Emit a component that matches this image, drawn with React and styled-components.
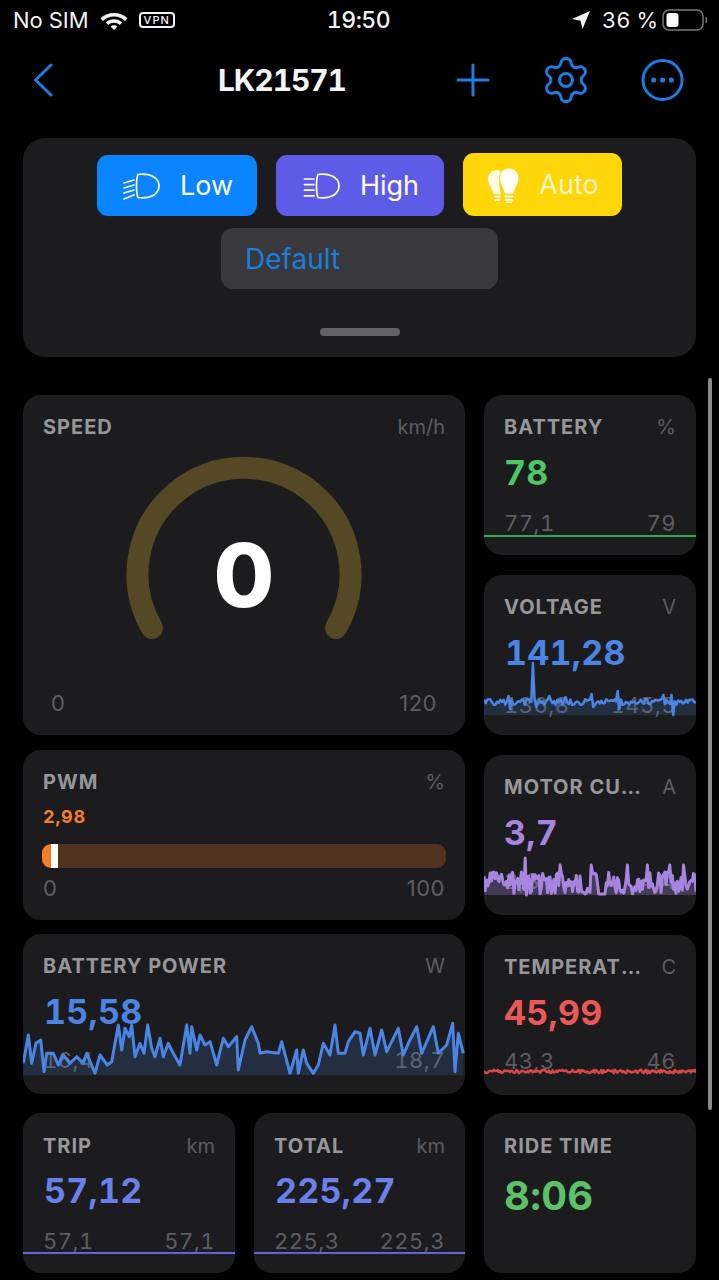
import React from 'react';
import styled, { createGlobalStyle } from 'styled-components';
import { Settings } from 'lucide-react';

const Global = createGlobalStyle`
  html, body { margin: 0; background: #000; }
  * { box-sizing: border-box; }
`;
const Page = styled.div`
  position: relative; width: 719px; height: 1280px; overflow: hidden; background: #000;
  font-family: Inter, "Liberation Sans", sans-serif; color: #fff;
`;
const StatusBar = styled.div`
  height: 40px; padding: 0 9px 0 13px; display: flex; align-items: center;
  font-size: 22px; color: #f2f2f2; font-variant-numeric: tabular-nums;
`;
const StatusSide = styled.div`
  flex: 1; display: flex; align-items: center; gap: ${p => p.$gap || 8}px; justify-content: ${p => p.$end ? 'flex-end' : 'flex-start'};
`;
const Time = styled.div`font-weight: 500; font-size: 23px; letter-spacing: -.5px; margin-right: 6px;`;
const Percent = styled.span`margin: 0 -3px 0 4px;`;
const Vpn = styled.span`
  border: 2px solid #f2f2f2; border-radius: 4px; font-size: 11px; line-height: 12px; padding: 0 3px; letter-spacing: 1px; font-weight: 500;
`;
const Nav = styled.div`
  height: 80px; display: flex; align-items: center; padding-left: 33px; color: #1b7de3;
`;
const Title = styled.div`
  margin-left: 165px; width: 127px; font-size: 30px; font-weight: 700; color: #f4f4f4; white-space: nowrap;
  font-variant-numeric: tabular-nums; letter-spacing: -1.1px;
`;
const NavIcon = styled.svg`display: block; flex: none; margin-left: ${p => p.$ml || 0}px;`;
const Panel = styled.section`
  margin: 18px 23px 0; height: 219px; border-radius: 22px; background: #1c1c1e; padding-top: 15px;
  display: flex; flex-direction: column; align-items: center;
`;
const ButtonRow = styled.div`display: flex; gap: 19px; align-items: flex-end;`;
const ModeButton = styled.div`
  width: ${p => p.$w}px; height: ${p => p.$h || 61}px; background: ${p => p.$bg}; border-radius: 11px;
  display: flex; align-items: center; justify-content: center; gap: 19px; padding-left: 2px; font-size: 27px; color: ${p => p.$fg || '#fff'};
`;
const Select = styled.div`
  margin-top: 12px; width: 277px; height: 61px; border-radius: 12px; background: #39393d; color: #1b7ddb;
  font-size: 28px; display: flex; align-items: center; padding-left: 24px;
`;
const Handle = styled.div`margin-top: 39px; width: 80px; height: 8px; border-radius: 4px; background: #636366;`;

const Grid = styled.main`
  margin: 38px 23px 0; display: grid; grid-template-columns: 442px 212px; column-gap: 19px;
`;
const Column = styled.div`display: flex; flex-direction: column; gap: ${p => p.$gap || 0}px;`;
const Card = styled.article`
  position: relative; overflow: hidden; flex: none; background: #1c1c1e; border-radius: 18px;
  height: ${p => p.$h || 160}px; margin-bottom: ${p => p.$mb || 0}px; width: ${p => p.$w ? p.$w + 'px' : 'auto'};
`;
const Header = styled.header`
  display: flex; justify-content: space-between; gap: 8px; padding: ${p => p.$pt || 20}px 20px 0 20px; height: 56px; line-height: 24px;
`;
const Label = styled.h3`
  margin: 0; flex: 1; min-width: 0; overflow: hidden; white-space: nowrap; text-overflow: ellipsis;
  font-size: 20px; line-height: 24px; font-weight: 700; color: #97979b; letter-spacing: 1px;
`;
const Unit = styled.span`font-size: 20px; color: #5d5d61; flex: none;`;
const Value = styled.div`
  padding-left: ${p => p.$pl || 20}px; margin-top: ${p => p.$mt || 0}px; font-size: ${p => p.$size || 34}px; line-height: 44px; font-weight: 700; letter-spacing: .3px; color: ${p => p.$color};
  font-variant-numeric: tabular-nums;
`;
const Range = styled.div`
  display: flex; justify-content: space-between; padding: 0 ${p => p.$pr || 20}px 0 ${p => p.$pl || 20}px; margin-top: ${p => p.$mt || 15}px;
  font-size: 22px; line-height: 26px; color: #5d5d61; letter-spacing: .5px;
  font-variant-numeric: ${p => p.$plain ? 'normal' : 'tabular-nums'};
`;
const Chart = styled.svg`position: absolute; left: 0; top: 0; pointer-events: none;`;
const Gauge = styled.div`
  position: relative; width: 236px; height: 186px; margin: 7px auto 0;
  svg { overflow: visible; }
`;
const GaugeValue = styled.div`
  position: absolute; left: 0; right: 0; top: 117px; height: 0; display: flex; align-items: center; justify-content: center;
  font-size: 88px; font-weight: 800; color: #fff;
`;
const PwmValue = styled.div`padding-left: 20px; font-size: 18px; line-height: 22px; font-weight: 700; letter-spacing: .8px; color: #f57f26; font-variant-numeric: tabular-nums;`;
const Track = styled.div`
  position: relative; margin: 16px 19px 0; height: 24px; border-radius: 9px; background: #4f3220; overflow: hidden;
`;
const TrackFill = styled.div`position: absolute; left: 0; top: 0; bottom: 0; background: #f57f26;`;
const Thumb = styled.div`position: absolute; top: 0; bottom: 0; width: 7px; background: #fff;`;
const BottomRow = styled.div`display: flex; gap: 19px;`;
const Scrollbar = styled.div`position: absolute; left: 708px; top: 378px; width: 4px; height: 732px; border-radius: 2px; background: #8a8a8e;`;

const powerZoom = [[10,400],[25,315],[35,400],[48,340],[62,330],[72,425],[80,370],[100,370],[115,405],[130,375],[150,400],[170,380],[190,400],[200,370],[225,430],[240,375],[262,405],[275,395],[295,285],[305,360],[315,295],[328,320],[335,285],[345,380],[360,340],[372,370],[383,285],[395,355],[405,380],[420,325],[430,380],[445,340],[460,370],[480,405],[500,285],[510,370],[515,290],[530,360],[540,315],[555,345],[570,335],[590,405],[610,325],[625,350],[650,320],[655,420],[675,330],[695,290],[715,340],[720,370],[740,365],[775,370],[785,335],[810,430],[830,360],[835,430],[850,360],[860,400],[880,430],[895,405],[910,340],[930,375],[945,285],[955,370],[975,370],[985,335],[1005,305],[1020,310],[1030,375],[1050,295],[1065,375],[1085,300],[1100,365],[1135,295],[1150,375],[1165,340],[1190,290],[1205,370],[1240,290],[1255,370],[1280,345],[1298,280],[1305,425],[1315,310],[1330,370]];
const power = powerZoom.map(([x, y]) => [x / 3 - 3, y / 3 - 4]);

function noise(seed, n, width, base, amp, spikes = {}) {
  let s = seed;
  const pts = [];
  for (let i = 0; i <= n; i++) {
    s = (s * 16807) % 2147483647;
    const r = (s % 1000) / 1000 - 0.5;
    const x = (i / n) * width;
    pts.push([x, spikes[i] ?? base + r * amp]);
  }
  return pts;
}
const voltage = noise(77, 130, 212, 127, 6, { 30: 88, 32: 132, 82: 116, 83: 134, 116: 140, 115: 120, 15: 121, 16: 134, 110: 120, 66: 119, 67: 132, 40: 121, 50: 122 });
const motor = noise(911, 170, 212, 128, 22, { 33: 103, 34: 140, 61: 110, 86: 110, 115: 110, 131: 110, 81: 139, 92: 139, 93: 139, 94: 139, 95: 139, 96: 139, 97: 139, 149: 110, 160: 110 });
const temperature = noise(345, 170, 212, 136.5, 3.5);

const toLine = pts => pts.map(([x, y], i) => `${i ? 'L' : 'M'}${x.toFixed(1)} ${y.toFixed(1)}`).join('');

function Spark({ w = 212, pts, color, floor = 140, sw = 2.5, fill = .18 }) {
  const d = toLine(pts);
  const area = `${d}L${pts[pts.length - 1][0]} ${floor}L${pts[0][0]} ${floor}Z`;
  return (
    <Chart width={w} height={160} viewBox={`0 0 ${w} 160`}>
      <path d={area} fill={color} opacity={fill} />
      <path d={d} fill="none" stroke={color} strokeWidth={sw} strokeLinejoin="round" />
    </Chart>
  );
}
function Flat({ w = 212, y, color }) {
  return (
    <Chart width={w} height={160} viewBox={`0 0 ${w} 160`}>
      <rect x="0" y={y} width={w} height="2" fill={color} />
    </Chart>
  );
}
function Beam({ slant }) {
  const ys = [9, 14, 19, 24];
  return (
    <svg width="38" height="30" viewBox="0 0 38 30" fill="none" stroke="#fff" strokeWidth="1.7" strokeLinecap="round">
      <path d="M15 3.500C13 8 13 22 15 26.500C26 28 36 24 36 15C36 6 26 2 15 3.500Z" />
      {ys.map((y, i) => (
        <path key={y} d={slant ? `M1 ${y + 3 + (i === 3 ? 1 : 0)}L11 ${y}` : `M1.500 ${y - 1 + i * 0.6}H11`} />
      ))}
    </svg>
  );
}
function Bulb() {
  return (
    <svg width="32" height="36" viewBox="0 0 32 36" fill="#fff">
      <path d="M9 3C3.500 3 0 7.500 0 12.500C0 17.500 4 21 5.500 27H13C11 20 10 12 13 5C12 3.800 10.500 3 9 3Z" opacity=".9" />
      <path d="M21 1C15 1 11.500 6 11.500 11.500C11.500 17.500 15.500 20.500 16.500 27H25.500C26.500 20.500 31 17.500 31 11.500C31 6 27 1 21 1Z" stroke="#ffd60a" strokeWidth="1" />
      <rect x="6" y="28.500" width="6.500" height="2" rx="1" />
      <rect x="7" y="32" width="5.500" height="2" rx="1" />
      <rect x="16.500" y="28.500" width="9" height="2" rx="1" />
      <rect x="17" y="32" width="8" height="1.800" rx=".9" />
      <rect x="18" y="34.500" width="6" height="1.500" rx=".7" />
    </svg>
  );
}

export default function App() {
  return (
    <Page>
      <Global />
      <StatusBar>
        <StatusSide $gap={10}>
          <span>No SIM</span>
          <svg width="30" height="22" viewBox="0 0 30 22" fill="#f2f2f2">
            <path d="M15 4C20.500 4 25.300 6 28.500 9.300L26 12C23.200 9.300 19.500 7.600 15 7.600C10.500 7.600 6.800 9.300 4 12L1.500 9.300C4.700 6 9.500 4 15 4Z" />
            <path d="M15 10.200C18.300 10.200 21 11.400 23.200 13.400L20.700 16C19.200 14.700 17.300 13.800 15 13.800C12.700 13.800 10.800 14.700 9.300 16L6.800 13.400C9 11.400 11.700 10.200 15 10.200Z" />
            <path d="M15 16.200C16.400 16.200 17.500 16.700 18.400 17.400L15 21L11.600 17.400C12.500 16.700 13.600 16.200 15 16.200Z" />
          </svg>
          <Vpn>VPN</Vpn>
        </StatusSide>
        <Time>19:50</Time>
        <StatusSide $end $gap={7}>
          <svg width="20" height="20" viewBox="0 0 20 20" fill="#f2f2f2">
            <path d="M19 1L11.500 19L9.500 10.800L1 9Z" />
          </svg>
          <Percent>36 %</Percent>
          <svg width="48" height="24" viewBox="0 0 48 24">
            <rect x="1" y="2" width="40" height="20" rx="6" fill="none" stroke="#77777a" strokeWidth="1.500" />
            <rect x="4.500" y="5" width="12" height="14" rx="3" fill="#fff" />
            <rect x="43.500" y="9" width="1.500" height="6" rx=".7" fill="#77777a" />
          </svg>
        </StatusSide>
      </StatusBar>
      <Nav>
        <NavIcon width="20" height="34" viewBox="0 0 20 34" fill="none" stroke="currentColor" strokeWidth="3" strokeLinecap="round" strokeLinejoin="round">
          <path d="M18 2L2.500 17L18 32" />
        </NavIcon>
        <Title>LK21571</Title>
        <NavIcon $ml={111} width="34" height="34" viewBox="0 0 34 34" fill="none" stroke="currentColor" strokeWidth="3" strokeLinecap="round">
          <path d="M17 2V32M2 17H32" />
        </NavIcon>
        <NavIcon as={Settings} $ml={50} size={52} strokeWidth={1.400} />
        <NavIcon $ml={49} width="43" height="44" viewBox="0 0 44 44" fill="none" stroke="currentColor" strokeWidth="3">
          <circle cx="22" cy="22" r="20" />
          <circle cx="13" cy="22" r="2.600" fill="currentColor" stroke="none" />
          <circle cx="22" cy="22" r="2.600" fill="currentColor" stroke="none" />
          <circle cx="31" cy="22" r="2.600" fill="currentColor" stroke="none" />
        </NavIcon>
      </Nav>
      <Panel>
        <ButtonRow>
          <ModeButton $w={160} $bg="#0a84ff"><Beam slant /><span>Low</span></ModeButton>
          <ModeButton $w={168} $bg="#5e5ce6"><Beam /><span>High</span></ModeButton>
          <ModeButton $w={159} $h={63} $bg="#ffd60a" $fg="#fff5c0"><Bulb /><span>Auto</span></ModeButton>
        </ButtonRow>
        <Select>Default</Select>
        <Handle />
      </Panel>
      <Grid>
        <Column>
          <Card $h={340} $mb={15}>
            <Header><Label>SPEED</Label><Unit>km/h</Unit></Header>
            <Gauge>
              <svg width="236" height="186" viewBox="0 0 236 186">
                <path d="M26 170A106.500 106.500 0 1 1 210 170" fill="none" stroke="#544825" strokeWidth="22" strokeLinecap="round" />
              </svg>
              <GaugeValue>0</GaugeValue>
            </Gauge>
            <Range $plain $pl={28} $pr={28} $mt={46}><span>0</span><span>120</span></Range>
          </Card>
          <Card $h={170} $mb={14}>
            <Header><Label>PWM</Label><Unit>%</Unit></Header>
            <PwmValue>2,98</PwmValue>
            <Track>
              <TrackFill style={{ width: 9 }} />
              <Thumb style={{ left: 9 }} />
            </Track>
            <Range $plain $mt={7}><span>0</span><span>100</span></Range>
          </Card>
          <Card $h={160} $mb={19}>
            <Header><Label>BATTERY POWER</Label><Unit>W</Unit></Header>
            <Value $color="#4a85e5" $pl={21}>15,58</Value>
            <Range $mt={13}><span>16,4</span><span>18,7</span></Range>
            <Spark w={442} pts={power} color="#4a85e5" floor={141} sw={3} />
          </Card>
          <BottomRow>
            <Card $w={212}>
              <Header $pt={21}><Label>TRIP</Label><Unit>km</Unit></Header>
              <Value $color="#6a80ea" $pl={21}>57,12</Value>
              <Range><span>57,1</span><span>57,1</span></Range>
              <Flat y={139} color="#6464d8" />
            </Card>
            <Card $w={211}>
              <Header $pt={21}><Label>TOTAL</Label><Unit>km</Unit></Header>
              <Value $color="#6a80ea" $pl={21}>225,27</Value>
              <Range><span>225,3</span><span>225,3</span></Range>
              <Flat w={211} y={139} color="#6464d8" />
            </Card>
          </BottomRow>
        </Column>
        <Column $gap={20}>
          <Card>
            <Header><Label>BATTERY</Label><Unit>%</Unit></Header>
            <Value $color="#4cc764">78</Value>
            <Range><span>77,1</span><span>79</span></Range>
            <Flat y={140} color="#34a853" />
          </Card>
          <Card>
            <Header><Label>VOLTAGE</Label><Unit>V</Unit></Header>
            <Value $color="#4a85e5" $pl={21}>141,28</Value>
            <Range $mt={17}><span>136,8</span><span>145,5</span></Range>
            <Spark pts={voltage} color="#4a85e5" />
          </Card>
          <Card>
            <Header><Label>MOTOR CURRENT</Label><Unit>A</Unit></Header>
            <Value $color="#a685e0">3,7</Value>
            <Range $mt={13}><span>2,8</span><span>4,4</span></Range>
            <Spark pts={motor} color="#a685e0" sw={3} fill={.3} />
          </Card>
          <Card $mb={-2}>
            <Header><Label>TEMPERATURE</Label><Unit>C</Unit></Header>
            <Value $color="#ec5757">45,99</Value>
            <Range $mt={13}><span>43,3</span><span>46</span></Range>
            <Spark pts={temperature} color="#d94848" floor={137} />
          </Card>
          <Card>
            <Header $pt={21}><Label>RIDE TIME</Label></Header>
            <Value $color="#5bc26a" $size={40} $mt={5}>8:06</Value>
          </Card>
        </Column>
      </Grid>
      <Scrollbar />
    </Page>
  );
}
